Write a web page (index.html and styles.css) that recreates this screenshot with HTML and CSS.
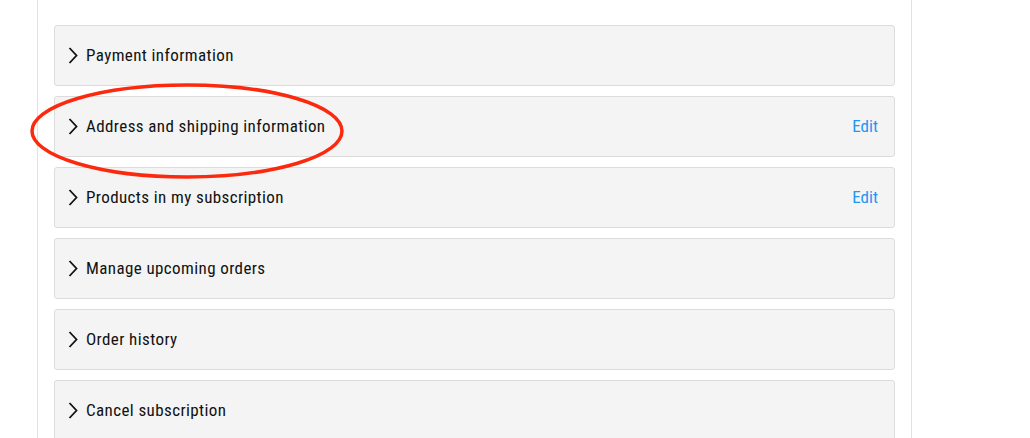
FILE: index.html
```html
<!DOCTYPE html>
<html>
<head lang="en">
    <meta charset="UTF-8">
    <title>Subscription</title>
    <link rel="stylesheet" href="styles.css">
</head>
<body>
<div class="page">
    <div class="panel">
        <span class="arrow"><svg width="10" height="17" viewBox="0 0 10 17"><path d="M1.5 1 L8.5 8.5 L1.5 16" fill="none" stroke="#111" stroke-width="1.8"/></svg></span>
        <span class="title">Payment information</span>
    </div>
    <div class="panel">
        <span class="arrow"><svg width="10" height="17" viewBox="0 0 10 17"><path d="M1.5 1 L8.5 8.5 L1.5 16" fill="none" stroke="#111" stroke-width="1.8"/></svg></span>
        <span class="title">Address and shipping information</span>
        <a class="edit" href="#">Edit</a>
        <svg class="circle" width="320" height="100" viewBox="0 0 320 100"><ellipse cx="157" cy="48" rx="155" ry="46" fill="none" stroke="#fb2a0e" stroke-width="3.5"/></svg>
    </div>
    <div class="panel">
        <span class="arrow"><svg width="10" height="17" viewBox="0 0 10 17"><path d="M1.5 1 L8.5 8.5 L1.5 16" fill="none" stroke="#111" stroke-width="1.8"/></svg></span>
        <span class="title">Products in my subscription</span>
        <a class="edit" href="#">Edit</a>
    </div>
    <div class="panel">
        <span class="arrow"><svg width="10" height="17" viewBox="0 0 10 17"><path d="M1.5 1 L8.5 8.5 L1.5 16" fill="none" stroke="#111" stroke-width="1.8"/></svg></span>
        <span class="title">Manage upcoming orders</span>
    </div>
    <div class="panel">
        <span class="arrow"><svg width="10" height="17" viewBox="0 0 10 17"><path d="M1.5 1 L8.5 8.5 L1.5 16" fill="none" stroke="#111" stroke-width="1.8"/></svg></span>
        <span class="title">Order history</span>
    </div>
    <div class="panel">
        <span class="arrow"><svg width="10" height="17" viewBox="0 0 10 17"><path d="M1.5 1 L8.5 8.5 L1.5 16" fill="none" stroke="#111" stroke-width="1.8"/></svg></span>
        <span class="title">Cancel subscription</span>
    </div>
</div>
</body>
</html>
```

FILE: styles.css
```css
*{
    margin: 0;
    padding: 0;
    box-sizing: border-box;
}
html,
body{
    height: 438px;
    overflow: hidden;
}
body{
    background: #fff;
    font-family: Roboto, "Liberation Sans", sans-serif;
}
.page{
    width: 875px;
    height: 438px;
    margin-left: 37px;
    padding: 25px 16px 0;
    border-left: 1px solid #e2e2e2;
    border-right: 1px solid #e2e2e2;
}
.panel{
    position: relative;
    height: 61px;
    margin-bottom: 10px;
    padding: 0 16px 2px 13px;
    display: flex;
    align-items: center;
    background: #f4f4f4;
    border: 1px solid #dcdcdc;
    border-radius: 3px;
}
.arrow{
    display: flex;
    width: 18px;
    margin-top: 2px;
}
.title{
    flex: 1;
    font-size: 17px;
    font-stretch: 80%;
    color: #111;
    letter-spacing: 0.4px;
}
.edit{
    font-size: 17px;
    font-stretch: 82%;
    color: #2196f3;
    text-decoration: none;
}
.circle{
    position: absolute;
    left: -25px;
    top: -14px;
    z-index: 1;
    pointer-events: none;
}
```
